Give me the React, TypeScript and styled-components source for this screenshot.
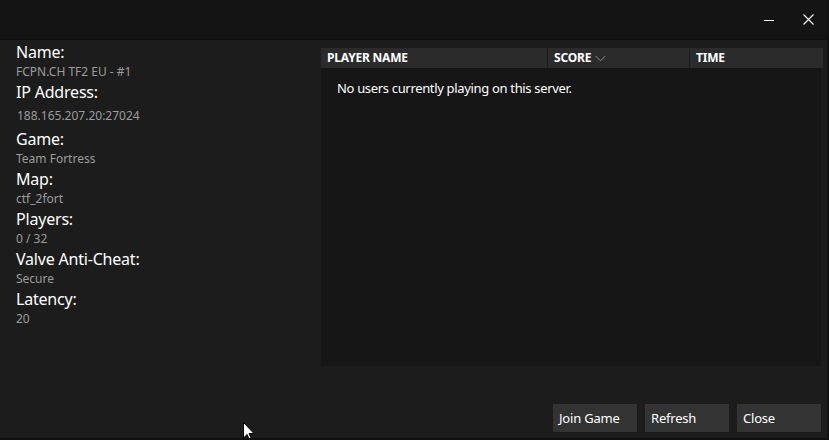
import React from "react";
import styled, { createGlobalStyle } from "styled-components";

const Global = createGlobalStyle`
  html, body { margin: 0; padding: 0; background: #101010; }
  body { font-family: "Segoe UI", "Noto Sans", "Open Sans", sans-serif; }
  * { box-sizing: border-box; }
`;

const Window = styled.div`
  position: relative;
  width: 827px;
  height: 438px;
  background: #1c1c1c;
  display: flex;
  flex-direction: column;
  color: #fff;
  overflow: hidden;
`;

const TitleBar = styled.div`
  height: 40px;
  background: #141414;
  border-bottom: 1px solid #0f0f0f;
  display: flex;
  justify-content: flex-end;
  align-items: stretch;
`;

const CaptionButton = styled.div<{ $w: number }>`
  width: ${(p) => p.$w}px;
  display: flex;
  align-items: center;
  justify-content: center;
`;

const Body = styled.div`
  flex: 1;
  display: flex;
  flex-direction: column;
  padding: 0 6px 6px 0;
`;

const Content = styled.div`
  display: flex;
  flex: 1;
`;

const InfoPanel = styled.div`
  width: 321px;
  padding: 2px 0 0 16px;
  display: flex;
  flex-direction: column;
`;

const Label = styled.div`
  font-size: 16px;
  line-height: 20px;
  height: 20px;
  color: #ffffff;
  letter-spacing: -0.2px;
`;

const Value = styled.div<{ $boxed?: boolean }>`
  font-size: 12px;
  line-height: 20px;
  height: ${(p) => (p.$boxed ? 27 : 20)}px;
  padding: ${(p) => (p.$boxed ? "4px 0 3px 1px" : "0")};
  color: #9c9c9c;
`;

const Table = styled.div`
  margin-top: 8px;
  width: 500px;
  height: 318px;
  background: #161616;
  display: flex;
  flex-direction: column;
`;

const HeaderRow = styled.div`
  display: grid;
  grid-template-columns: 226px 141px 133px;
  height: 20px;
  background: #1c1c1c;
  gap: 1px;
`;

const HeaderCell = styled.div`
  background: #2b2b2b;
  font-size: 12px;
  font-weight: 700;
  line-height: 20px;
  padding-left: 6px;
  color: #fff;
  display: flex;
  align-items: center;
  gap: 4px;
  letter-spacing: -0.2px;
`;

const EmptyMessage = styled.div`
  font-size: 13px;
  line-height: 20px;
  padding: 10px 0 0 16px;
  color: #fff;
  letter-spacing: -0.33px;
`;

const Footer = styled.div`
  display: flex;
  justify-content: flex-end;
  gap: 8px;
`;

const Button = styled.div`
  width: 84px;
  height: 28px;
  background: #333333;
  color: #fff;
  font-size: 13px;
  line-height: 28px;
  padding-left: 6px;
  letter-spacing: -0.2px;
`;

const Cursor = styled.svg`
  position: absolute;
  left: 243px;
  top: 422px;
`;

const info: { label: string; value: string; boxed?: boolean }[] = [
  { label: "Name:", value: "FCPN.CH TF2 EU - #1" },
  { label: "IP Address:", value: "188.165.207.20:27024", boxed: true },
  { label: "Game:", value: "Team Fortress" },
  { label: "Map:", value: "ctf_2fort" },
  { label: "Players:", value: "0 / 32" },
  { label: "Valve Anti-Cheat:", value: "Secure" },
  { label: "Latency:", value: "20" },
];

export default function App() {
  return (
    <>
      <Global />
      <Window>
        <TitleBar>
          <CaptionButton $w={40}>
            <svg width="10" height="10" viewBox="0 0 10 10">
              <line x1="0" y1="5.5" x2="10" y2="5.5" stroke="#fff" strokeWidth="1" />
            </svg>
          </CaptionButton>
          <CaptionButton $w={38}>
            <svg width="11" height="11" viewBox="0 0 11 11">
              <path d="M0.5 0.5 L10.5 10.5 M10.5 0.5 L0.5 10.5" stroke="#fff" strokeWidth="1.1" />
            </svg>
          </CaptionButton>
        </TitleBar>
        <Body>
          <Content>
            <InfoPanel>
              {info.map((i) => (
                <React.Fragment key={i.label}>
                  <Label>{i.label}</Label>
                  <Value $boxed={i.boxed}>{i.value}</Value>
                </React.Fragment>
              ))}
            </InfoPanel>
            <Table>
              <HeaderRow>
                <HeaderCell>PLAYER NAME</HeaderCell>
                <HeaderCell>
                  SCORE
                  <svg width="11" height="7" viewBox="0 0 11 7">
                    <path d="M0.5 0.8 L5.5 5.8 L10.5 0.8" stroke="#8a8a8a" strokeWidth="1" fill="none" />
                  </svg>
                </HeaderCell>
                <HeaderCell>TIME</HeaderCell>
              </HeaderRow>
              <EmptyMessage>No users currently playing on this server.</EmptyMessage>
            </Table>
          </Content>
          <Footer>
            <Button>Join Game</Button>
            <Button>Refresh</Button>
            <Button>Close</Button>
          </Footer>
        </Body>
        <Cursor width="12" height="19" viewBox="0 0 12 19">
          <path d="M0.5 0.5 L0.5 16 L4 12.5 L6.5 18 L8.5 17 L6 11.5 L11 11.5 Z" fill="#fff" stroke="#000" strokeWidth="1" />
        </Cursor>
      </Window>
    </>
  );
}
